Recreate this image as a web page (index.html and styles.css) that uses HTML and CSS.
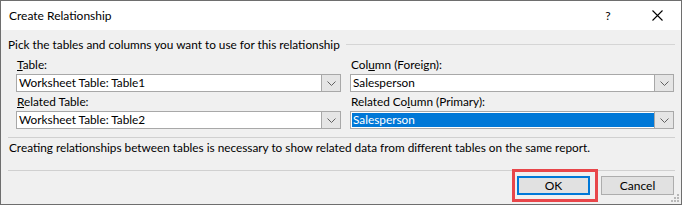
FILE: index.html
```html
<!DOCTYPE html>
<html>
<head>
<meta charset="utf-8">
<link rel="stylesheet" href="styles.css">
</head>
<body>
<div class="dialog">
  <div class="titlebar">
    <span class="title">Create Relationship</span>
    <span class="help">?</span>
    <span class="close">
      <svg width="11" height="11" viewBox="0 0 11 11"><path d="M0.5 0.5 L10.5 10.5 M10.5 0.5 L0.5 10.5" stroke="#000" stroke-width="1.1" fill="none"/></svg>
    </span>
  </div>
  <div class="body">
    <div class="group-head">
      <span>Pick the tables and columns you want to use for this relationship</span>
      <span class="rule"></span>
    </div>
    <div class="fields">
      <div class="field">
        <div class="label"><u>T</u>able:</div>
        <div class="combo"><span class="value">Worksheet Table: Table1</span><span class="drop"><svg width="9" height="5" viewBox="0 0 9 5"><path d="M0.5 0.5 L4.5 4.5 L8.5 0.5" stroke="#606060" fill="none"/></svg></span></div>
      </div>
      <div class="field">
        <div class="label">Col<u>u</u>mn (Foreign):</div>
        <div class="combo"><span class="value">Salesperson</span><span class="drop"><svg width="9" height="5" viewBox="0 0 9 5"><path d="M0.5 0.5 L4.5 4.5 L8.5 0.5" stroke="#606060" fill="none"/></svg></span></div>
      </div>
      <div class="field">
        <div class="label"><u>R</u>elated Table:</div>
        <div class="combo"><span class="value">Worksheet Table: Table2</span><span class="drop"><svg width="9" height="5" viewBox="0 0 9 5"><path d="M0.5 0.5 L4.5 4.5 L8.5 0.5" stroke="#606060" fill="none"/></svg></span></div>
      </div>
      <div class="field">
        <div class="label">Related Co<u>l</u>umn (Primary):</div>
        <div class="combo focused"><span class="value selected">Salesperson</span><span class="drop"><svg width="9" height="5" viewBox="0 0 9 5"><path d="M0.5 0.5 L4.5 4.5 L8.5 0.5" stroke="#606060" fill="none"/></svg></span></div>
      </div>
    </div>
    <div class="sep"></div>
    <p class="note">Creating relationships between tables is necessary to show related data from different tables on the same report.</p>
    <div class="sep sep2"></div>
    <div class="buttons">
      <span class="btn ok highlighted">OK</span>
      <span class="btn">Cancel</span>
    </div>
    <svg class="grip" width="9" height="9" viewBox="0 0 9 9">
      <rect x="6" y="0" width="2" height="2" fill="#b8b8b8"/>
      <rect x="3" y="3" width="2" height="2" fill="#b8b8b8"/>
      <rect x="6" y="3" width="2" height="2" fill="#b8b8b8"/>
      <rect x="0" y="6" width="2" height="2" fill="#b8b8b8"/>
      <rect x="3" y="6" width="2" height="2" fill="#b8b8b8"/>
      <rect x="6" y="6" width="2" height="2" fill="#b8b8b8"/>
    </svg>
  </div>
</div>
</body>
</html>
```
FILE: styles.css
```css
html, body {
  margin: 0;
  padding: 0;
  background: #f0f0f0;
}
body {
  font-family: "Lato", "Liberation Sans", sans-serif;
  font-size: 11.8px;
  color: #000;
}
.dialog {
  width: 682px;
  height: 205px;
  box-sizing: border-box;
  border: 1px solid #6e6e6e;
  display: flex;
  flex-direction: column;
  background: #f0f0f0;
}
.titlebar {
  height: 29px;
  flex: none;
  background: #fff;
  display: flex;
  align-items: center;
  padding-left: 8px;
}
.title {
  font-size: 12px;
  flex: 1;
  line-height: 16px;
}
.help {
  font-size: 12px;
  width: 12px;
  text-align: center;
  margin-right: 38px;
}
.close {
  width: 11px;
  height: 11px;
  margin-right: 18px;
  display: flex;
}
.body {
  flex: 1;
  position: relative;
  padding: 7px 6px 0 7px;
}
.group-head {
  display: flex;
  align-items: center;
  height: 16px;
  line-height: 16px;
}
.rule {
  flex: 1;
  border-top: 1px solid #d5d5d5;
  margin-left: 6px;
  margin-top: -1px;
}
.fields {
  display: grid;
  grid-template-columns: 325px 324px;
  column-gap: 9px;
  row-gap: 1px;
  margin-top: 3px;
  padding-left: 8px;
}
.label {
  height: 18px;
  line-height: 18px;
  padding-left: 1px;
}
.combo {
  height: 18px;
  box-sizing: border-box;
  border: 1px solid #a8a8a8;
  background: #fff;
  display: flex;
}
.value {
  flex: 1;
  line-height: 16px;
  padding-left: 2px;
}
.focused .value {
  margin: 1px 0 1px 1px;
  line-height: 14px;
  padding-left: 1px;
}
.selected {
  background: #0078d7;
  color: #fff;
}
.drop {
  width: 18px;
  border-left: 1px solid #a8a8a8;
  background: #e5e5e5;
  display: flex;
  align-items: center;
  justify-content: center;
}
.sep {
  border-top: 1px solid #d0d0d0;
  margin-top: 8px;
}
.note {
  margin: 2px 0 0 1px;
  line-height: 16px;
}
.sep2 {
  margin-top: 14px;
}
.buttons {
  display: flex;
  justify-content: flex-end;
  gap: 11px;
  margin-top: 5px;
  padding-right: 1px;
}
.btn {
  width: 73px;
  height: 19px;
  box-sizing: border-box;
  border: 1px solid #adadad;
  background: #e1e1e1;
  display: flex;
  align-items: center;
  justify-content: center;
  font-size: 12px;
}
.ok {
  border: 2px solid #0078d7;
}
.highlighted {
  position: relative;
}
.highlighted::after {
  content: "";
  position: absolute;
  left: -7px;
  top: -9px;
  right: -10px;
  bottom: -9px;
  border: 3px solid #e8464a;
}
.grip {
  position: absolute;
  right: 1px;
  bottom: 1px;
}
```
